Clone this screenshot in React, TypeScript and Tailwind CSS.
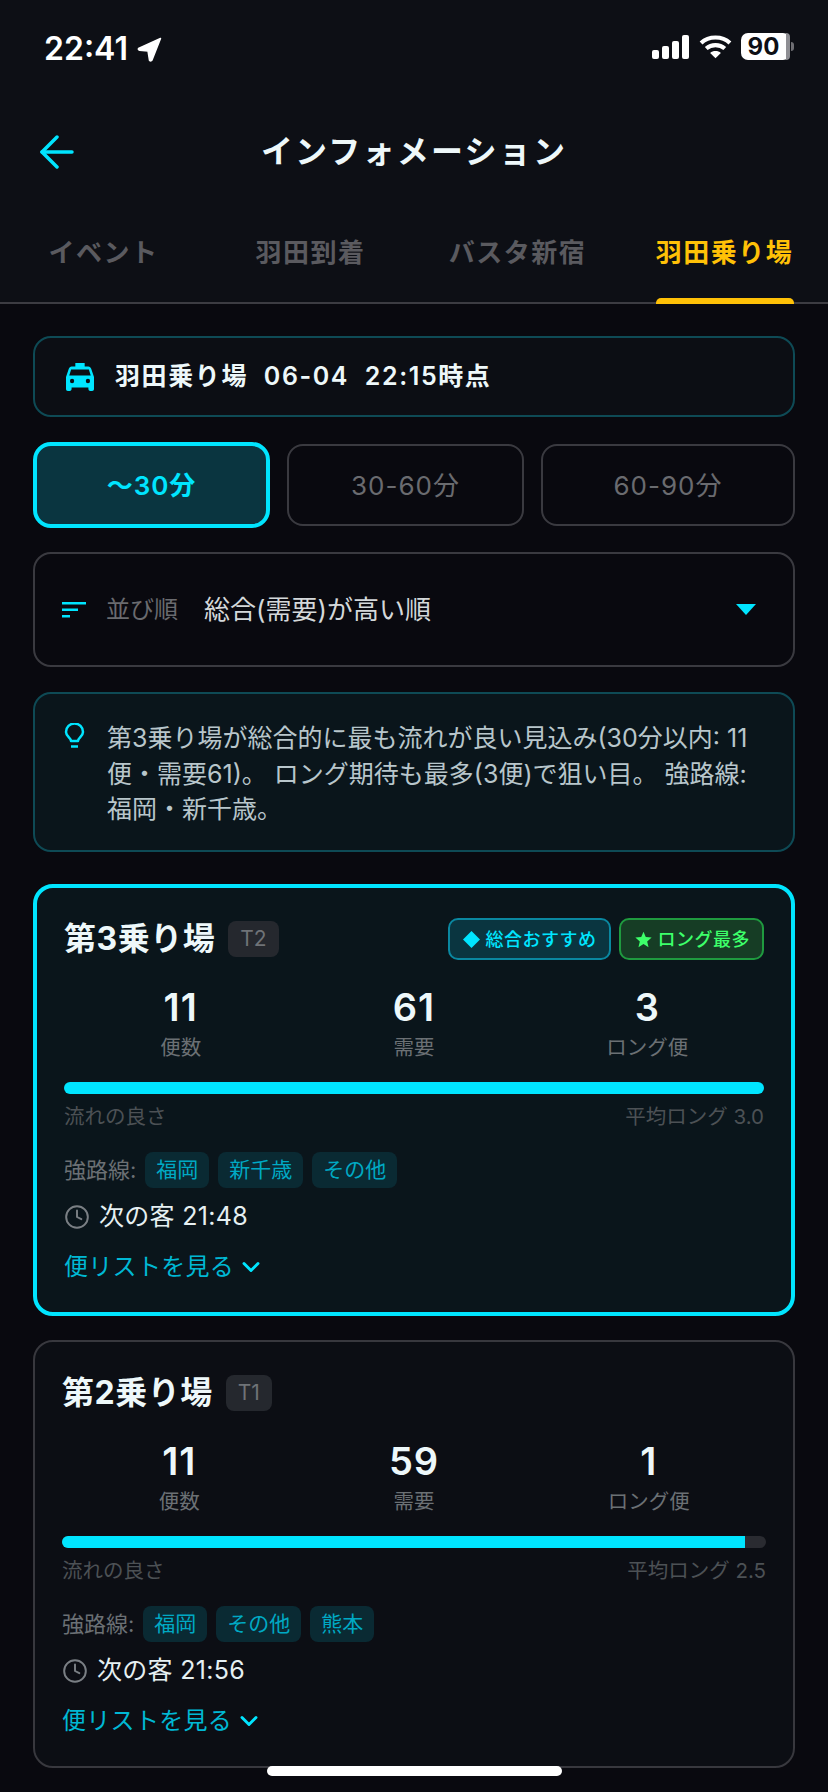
import React from "react";
import { Clock, ChevronDown } from "lucide-react";

interface CardData {
  name: string;
  terminal: string;
  flights: string;
  demand: string;
  longs: string;
  progress: number;
  avgLong: string;
  routes: string[];
  nextTime: string;
  highlight: boolean;
}

const cards: CardData[] = [
  {
    name: "第3乗り場",
    terminal: "T2",
    flights: "11",
    demand: "61",
    longs: "3",
    progress: 100,
    avgLong: "3.0",
    routes: ["福岡", "新千歳", "その他"],
    nextTime: "21:48",
    highlight: true,
  },
  {
    name: "第2乗り場",
    terminal: "T1",
    flights: "11",
    demand: "59",
    longs: "1",
    progress: 97,
    avgLong: "2.5",
    routes: ["福岡", "その他", "熊本"],
    nextTime: "21:56",
    highlight: false,
  },
];

const tabs = ["イベント", "羽田到着", "バスタ新宿", "羽田乗り場"];

const StatusBar = () => (
  <div className="flex h-[98px] items-start justify-between pl-[44px] pr-[34px] pt-[33px] text-white">
    <div className="flex items-center gap-[9px]">
      <span className="text-[32px] leading-[32px] font-semibold">22:41</span>
      <svg width="25" height="25" viewBox="0 0 25 25" fill="white">
        <path d="M23.5 1.5 L1.5 11.5 Q1 13 2.5 13.2 L11 14 L12.5 23.5 Q14 24.5 15 23 Z" stroke="white" strokeWidth="1.5" strokeLinejoin="round" />
      </svg>
    </div>
    <div className="flex items-center gap-[9px]">
      <svg width="38" height="24" viewBox="0 0 38 24" fill="white">
        <rect x="0" y="15" width="7" height="9" rx="2" />
        <rect x="10" y="11" width="7" height="13" rx="2" />
        <rect x="20" y="6" width="7" height="18" rx="2" />
        <rect x="30" y="0" width="7" height="24" rx="2" />
      </svg>
      <svg width="33" height="25" viewBox="0 0 32 24" fill="none" stroke="white" strokeWidth="4">
        <path d="M2 8.5 C9.5 1.5 22.5 1.5 30 8.5" />
        <path d="M7 14 C12 9.5 20 9.5 25 14" />
        <path d="M16 23.5 L10.8 18.3 C13.5 15.8 18.5 15.8 21.2 18.3 Z" fill="white" stroke="none" />
      </svg>
      <div className="flex items-center">
        <div className="flex h-[27px] w-[49px] items-center rounded-[7px] bg-white">
          <span className="w-[45px] text-center text-[24px] font-bold leading-none text-[#0d0f15]">90</span>
          <div className="h-full w-[4px] rounded-r-[7px] bg-[#8e8e93]" />
        </div>
        <div className="ml-[1px] h-[9px] w-[3px] rounded-r-[3px] bg-[#6e6e73]" />
      </div>
    </div>
  </div>
);

const StationCard = ({ card }: { card: CardData }) => {
  return (
    <div
      className={`rounded-[20px] px-[27px] pt-[27px] pb-[28px] ${
        card.highlight ? "border-4 border-[#00e5ff] bg-[#0a151b]" : "border-2 border-[#38383e] bg-[#0c0e14]"
      }`}
    >
      <div className="flex h-[48px] items-center justify-between">
        <div className="flex items-center gap-[13px]">
          <span className="text-[32px] font-bold leading-none tracking-[0.5px] text-[#eef8fa]">{card.name}</span>
          <span className="flex h-[36px] items-center rounded-[8px] bg-[#25282e] px-[12px] text-[21px] text-[#6f7377]">
            {card.terminal}
          </span>
        </div>
        {card.highlight && (
          <div className="flex items-center gap-[8px]">
            <div className="flex h-[42px] items-center gap-[6px] rounded-[10px] border-2 border-[#0a87a0] bg-[#0a3540] pl-[13px] pr-[12px] text-[18px] font-medium tracking-[0.5px] text-[#00e5ff]">
              <svg width="17" height="17" viewBox="0 0 17 17" fill="#00e5ff">
                <path d="M8.5 0 L17 8.5 L8.5 17 L0 8.5 Z" />
              </svg>
              総合おすすめ
            </div>
            <div className="flex h-[42px] items-center gap-[6px] rounded-[10px] border-2 border-[#1f9a3f] bg-[#163d25] pl-[14px] pr-[12px] text-[18px] font-medium tracking-[0.5px] text-[#3dff6a]">
              <svg width="17" height="17" viewBox="0 0 24 24" fill="#3dff6a">
                <path d="M12 1 L15.2 8.6 L23.5 9.3 L17.2 14.7 L19.1 22.8 L12 18.5 L4.9 22.8 L6.8 14.7 L0.5 9.3 L8.8 8.6 Z" />
              </svg>
              ロング最多
            </div>
          </div>
        )}
      </div>

      <div className="mt-[22px] grid grid-cols-3 text-center">
        {[
          { value: card.flights, label: "便数" },
          { value: card.demand, label: "需要" },
          { value: card.longs, label: "ロング便" },
        ].map((stat) => (
          <div key={stat.label}>
            <div className="h-[44px] text-[38px] font-semibold leading-[44px] tracking-[1px] text-[#eef8fa]">{stat.value}</div>
            <div className="mt-[4px] h-[30px] text-[20.5px] leading-[30px] text-[#6b7074]">{stat.label}</div>
          </div>
        ))}
      </div>

      <div className="mt-[19px] h-[12px] overflow-hidden rounded-full bg-[#2a2b31]">
        <div className="h-full bg-[#00e5ff]" style={{ width: `${card.progress}%` }} />
      </div>

      <div className="mt-[8px] flex h-[30px] items-center justify-between text-[20.5px] text-[#4c5155]">
        <span>流れの良さ</span>
        <span>平均ロング {card.avgLong}</span>
      </div>

      <div className="mt-[20px] flex h-[36px] items-center">
        <span className="mr-[9px] text-[22px] text-[#6b7074]">強路線:</span>
        <div className="flex gap-[9px]">
          {card.routes.map((route) => (
            <span key={route} className="flex h-[36px] items-center rounded-[8px] bg-[#0a2a33] px-[11px] text-[21px] text-[#00a9c4]">
              {route}
            </span>
          ))}
        </div>
      </div>

      <div className="mt-[14px] flex h-[30px] items-center gap-[9px] text-[25px] tracking-[0.3px] text-[#e6f0f2]">
        <Clock className="h-[26px] w-[26px] text-[#7a7f84]" strokeWidth={1.8} />
        <span>次の客 {card.nextTime}</span>
      </div>

      <div className="mt-[18px] flex h-[34px] items-center gap-[3px] text-[24px] tracking-[0.3px] text-[#00b8d4]">
        <span>便リストを見る</span>
        <ChevronDown className="h-[28px] w-[28px] text-[#00e5ff]" strokeWidth={2.5} />
      </div>
    </div>
  );
};

const App: React.FC = () => {
  return (
    <div className="relative min-h-[1792px] w-[828px] overflow-hidden bg-[#09090f] font-['Inter','Noto_Sans_CJK_JP',sans-serif]">
      {/* Header */}
      <div className="bg-[#0d0f15]">
        <StatusBar />
        <div className="relative flex h-[108px] items-center justify-center">
          <svg className="absolute left-[39px] top-[37px]" width="35" height="34" viewBox="0 0 35 34" fill="none" stroke="#00e5ff" strokeWidth="3.5" strokeLinecap="round" strokeLinejoin="round">
            <path d="M18 2 L3 17 L18 32" />
            <path d="M3 17 L33 17" />
          </svg>
          <h1 className="text-[32px] font-semibold tracking-[2.2px] text-[#eef8fa]">インフォメーション</h1>
        </div>
        <div className="grid h-[98px] grid-cols-4 border-b-2 border-[#3c3c42]">
          {tabs.map((tab, i) => (
            <div key={tab} className="relative flex items-center justify-center pb-[3px]">
              <span className={`text-[26px] font-semibold tracking-[1.5px] ${i === 3 ? "text-[#ffc107]" : "text-[#5a5a5f]"}`}>
                {tab}
              </span>
              {i === 3 && <div className="absolute bottom-[-2px] h-[6px] w-[138px] rounded-t-[5px] bg-[#ffc107]" />}
            </div>
          ))}
        </div>
      </div>

      <div className="px-[33px] pt-[32px] pb-[24px]">
        {/* Snapshot */}
        <div className="flex h-[81px] items-center gap-[21px] rounded-[18px] border-2 border-[#0e4a55] bg-[#0c0e14] pl-[31px]">
          <svg width="28" height="28" viewBox="0 0 30 28" preserveAspectRatio="none" fill="#00e5ff">
            <path d="M10 0 H20 V3.5 H24 C25.5 3.5 26.5 4.5 27 5.8 L30 14 V26 C30 27 29.2 28 28 28 H26 C25 28 24 27 24 26 V24.5 H6 V26 C6 27 5 28 4 28 H2 C0.8 28 0 27 0 26 V14 L3 5.8 C3.5 4.5 4.5 3.5 6 3.5 H10 Z M5.5 6.5 L3.5 12.5 H26.5 L24.5 6.5 Z" fillRule="evenodd" />
            <circle cx="6.5" cy="18" r="2.3" fill="#0c0e14" />
            <circle cx="23.5" cy="18" r="2.3" fill="#0c0e14" />
          </svg>
          <span className="text-[25px] font-semibold tracking-[1.6px] whitespace-pre text-[#eef8fa]">羽田乗り場  06-04  22:15時点</span>
        </div>

        {/* Time buttons */}
        <div className="mt-[25px] flex h-[86px] items-center gap-[17px]">
          <div className="flex h-[86px] w-[237px] items-center justify-center rounded-[18px] border-4 border-[#00e5ff] bg-[#0a3540] text-[26px] font-semibold tracking-[1px] text-[#00e5ff]">
            〜30分
          </div>
          <div className="flex h-[82px] w-[237px] items-center justify-center rounded-[16px] border-2 border-[#3a3a40] text-[26px] tracking-[1px] text-[#6a6b6f]">
            30-60分
          </div>
          <div className="flex h-[82px] w-[254px] items-center justify-center rounded-[16px] border-2 border-[#3a3a40] text-[26px] tracking-[1px] text-[#6a6b6f]">
            60-90分
          </div>
        </div>

        {/* Sort */}
        <div className="mt-[24px] flex h-[115px] items-center rounded-[18px] border-2 border-[#3a3a40] pl-[27px] pr-[37px]">
          <svg width="24" height="16" viewBox="0 0 24 16" fill="#00e5ff" className="mr-[20px]">
            <rect x="0" y="0" width="24" height="2.5" />
            <rect x="0" y="6.5" width="16" height="2.5" />
            <rect x="0" y="13" width="8" height="2.5" />
          </svg>
          <span className="text-[24px] text-[#6a6b6f]">並び順</span>
          <span className="ml-[26px] text-[26px] text-[#d4d8da]">総合(需要)が高い順</span>
          <svg width="20" height="11" viewBox="0 0 20 11" fill="#00e5ff" className="ml-auto">
            <path d="M0 0 H20 L10 11 Z" />
          </svg>
        </div>

        {/* Tip */}
        <div className="mt-[25px] flex h-[160px] rounded-[18px] border-2 border-[#0e4a55] bg-[#0a151b] pl-[29px] pr-[40px] pt-[27px]">
          <svg width="21" height="26" viewBox="0 0 21 26" fill="none" stroke="#00e5ff" strokeWidth="2.5" className="mt-[2px] shrink-0">
            <path d="M7 18 C7 15 2 13.5 2 9 A8.5 8.5 0 0 1 19 9 C19 13.5 14 15 14 18 Z" strokeLinejoin="round" />
            <path d="M7 23.5 H14" />
          </svg>
          <p className="ml-[22px] text-[25px] leading-[35.5px] text-[#b8c6cb]">
            第3乗り場が総合的に最も流れが良い見込み(30分以内: 11便・需要61)。 ロング期待も最多(3便)で狙い目。 強路線: 福岡・新千歳。
          </p>
        </div>

        {/* Cards */}
        <div className="mt-[32px] flex flex-col gap-[24px]">
          {cards.map((card) => (
            <StationCard key={card.name} card={card} />
          ))}
        </div>
      </div>

      <div className="absolute left-[267px] top-[1766px] h-[10px] w-[295px] rounded-full bg-white" />
    </div>
  );
};

export default App;
